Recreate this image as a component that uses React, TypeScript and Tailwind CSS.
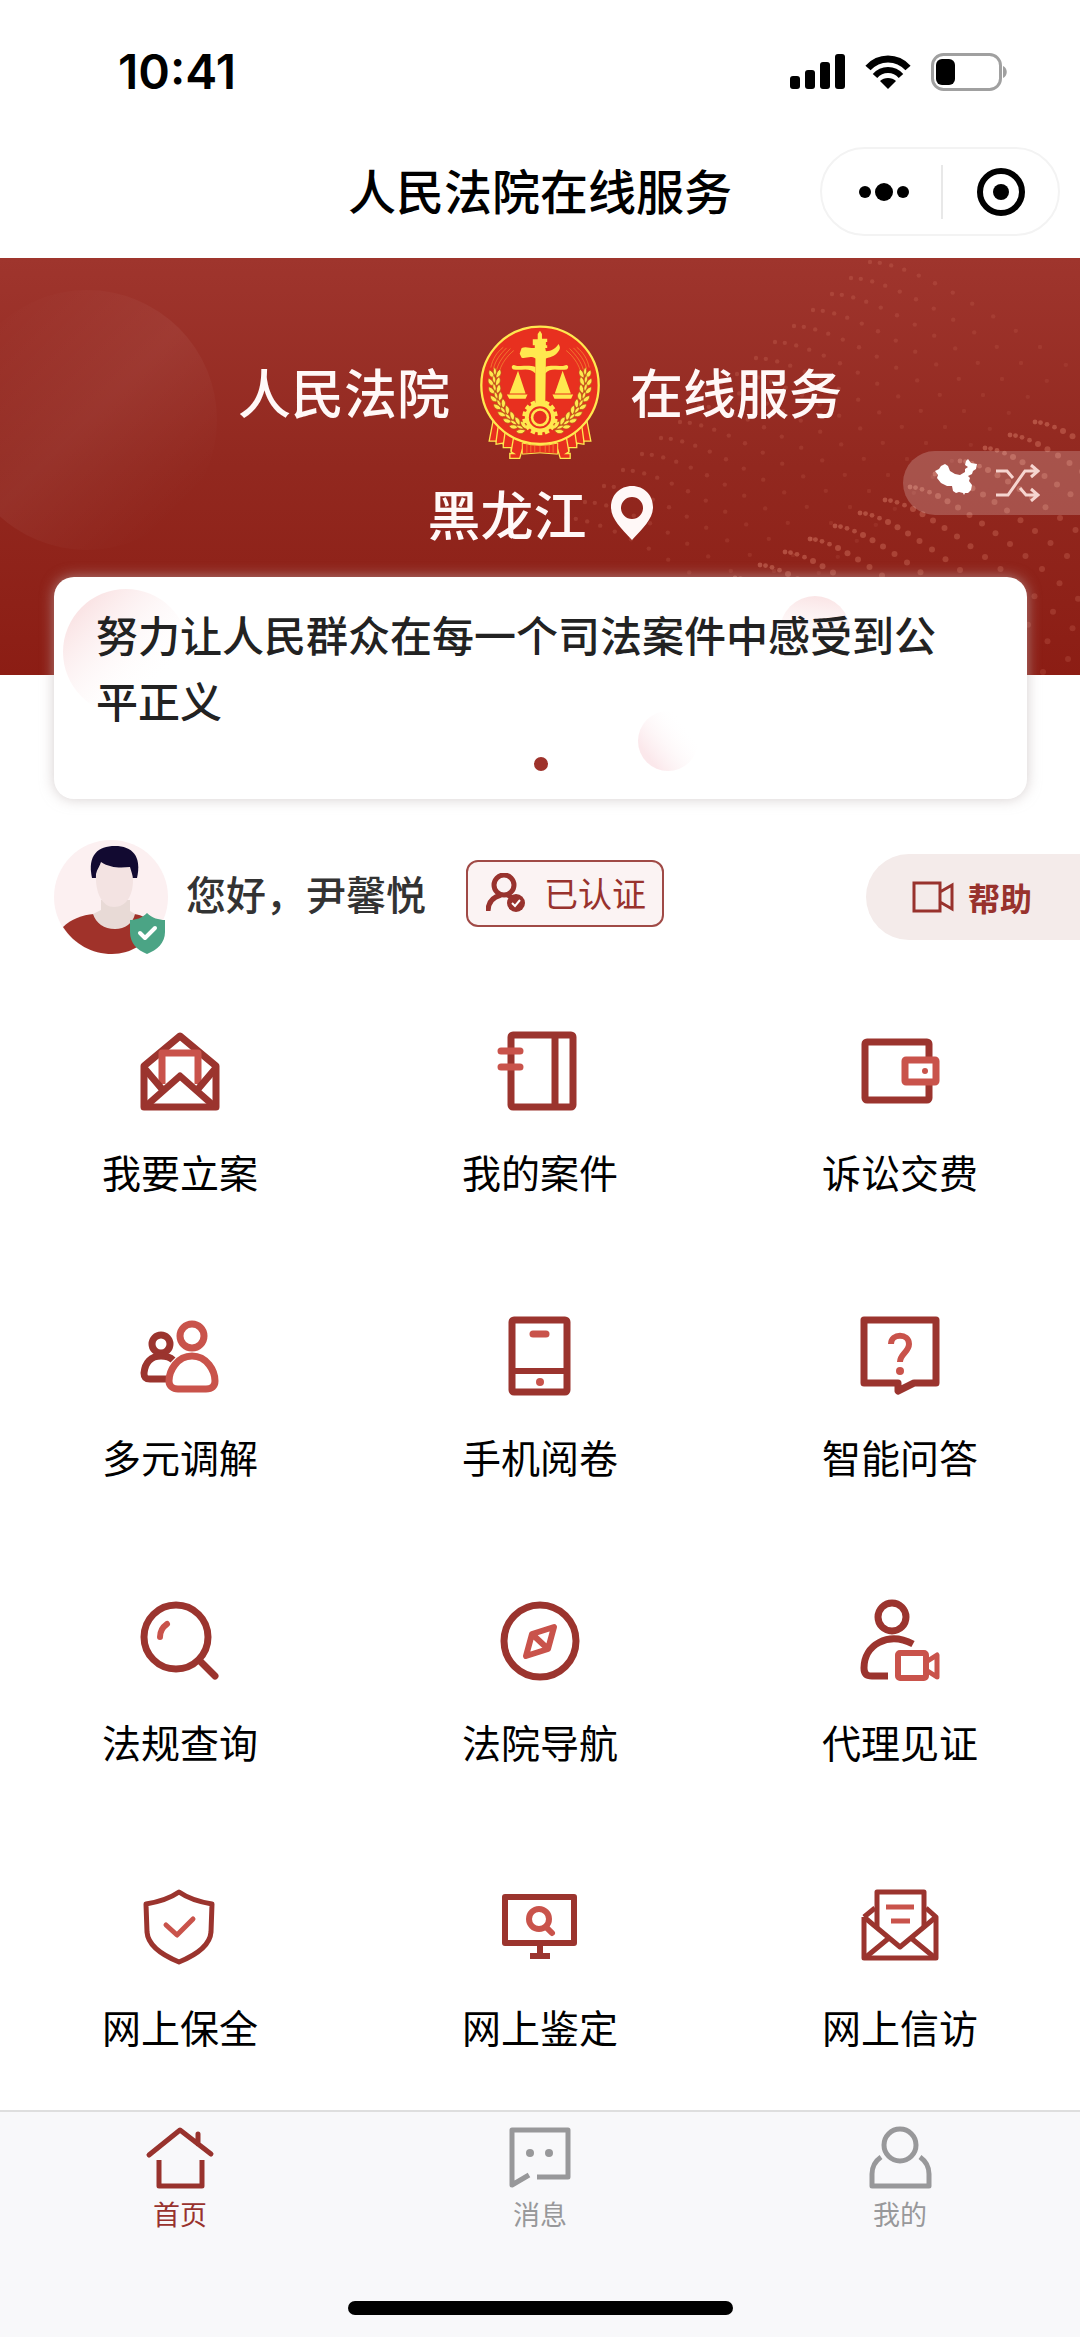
import React from "react";

const DARK = "#9b342e";
const LIGHT = "#c9534b";

type IconProps = { children: React.ReactNode };

function ServiceIcon({ children }: IconProps) {
  return (
    <svg viewBox="0 0 80 80" className="size-20 overflow-visible" fill="none" stroke={DARK} strokeWidth={7} strokeLinejoin="round" aria-hidden="true">
      {children}
    </svg>
  );
}

const services: { label: string; icon: React.ReactNode }[] = [
  {
    label: "我要立案",
    icon: (
      <ServiceIcon>
        <path d="M4 35L40 5L76 35V76H4Z" />
        <path d="M22 53V22H58V53" stroke={LIGHT} />
        <path d="M5 38L22 58M75 38L58 58M6 75L40 45L74 75" />
      </ServiceIcon>
    ),
  },
  {
    label: "我的案件",
    icon: (
      <ServiceIcon>
        <rect x="11" y="4" width="62" height="72" rx="2" />
        <path d="M55 4V76" />
        <path d="M1 20H20M1 36H20" stroke={LIGHT} strokeLinecap="round" />
      </ServiceIcon>
    ),
  },
  {
    label: "诉讼交费",
    icon: (
      <ServiceIcon>
        <rect x="5" y="11" width="64" height="58" rx="2" />
        <rect x="45" y="29" width="31" height="22" rx="1" stroke={LIGHT} fill="#fff" />
        <circle cx="65" cy="40" r="3" fill={LIGHT} stroke="none" />
      </ServiceIcon>
    ),
  },
  {
    label: "多元调解",
    icon: (
      <ServiceIcon>
        <circle cx="21" cy="28" r="9" />
        <path d="M26 63H10C5 63 4 61 4 57C5 47 11 40 21 40C26 40 30 41 33 44" />
        <circle cx="52" cy="20" r="12" stroke={LIGHT} />
        <path d="M52 40C37 40 29 55 29 65C29 70 33 73 38 73H66C72 73 75 70 75 65C75 55 67 40 52 40Z" stroke={LIGHT} fill="#fff" />
      </ServiceIcon>
    ),
  },
  {
    label: "手机阅卷",
    icon: (
      <ServiceIcon>
        <rect x="12" y="4" width="55" height="72" rx="2" />
        <path d="M12 55H67" strokeWidth={6} />
        <path d="M33 18H46" stroke={LIGHT} strokeLinecap="round" />
        <circle cx="40" cy="66" r="4" fill={LIGHT} stroke="none" />
      </ServiceIcon>
    ),
  },
  {
    label: "智能问答",
    icon: (
      <ServiceIcon>
        <path d="M4 4H76V67H54L38 75V67H4Z" />
        <path d="M31 28C31 17 49 17 49 28C49 36 40 38 40 46" stroke={LIGHT} strokeWidth={6} />
        <circle cx="40" cy="55" r="4" fill={LIGHT} stroke="none" />
      </ServiceIcon>
    ),
  },
  {
    label: "法规查询",
    icon: (
      <ServiceIcon>
        <circle cx="36" cy="36" r="32" />
        <path d="M60 60L75 75" strokeLinecap="round" />
        <path d="M27 23Q20 28 20 36" stroke={LIGHT} strokeWidth={6} strokeLinecap="round" />
      </ServiceIcon>
    ),
  },
  {
    label: "法院导航",
    icon: (
      <ServiceIcon>
        <circle cx="40" cy="40" r="36" />
        <path d="M54 26L48 48L26 55L32 33ZM32 33L48 48" stroke={LIGHT} strokeWidth={6} />
      </ServiceIcon>
    ),
  },
  {
    label: "代理见证",
    icon: (
      <ServiceIcon>
        <circle cx="32" cy="16" r="14" />
        <path d="M53 43C28 30 4 44 4 67C4 73 7 75 12 75H28" />
        <rect x="38" y="52" width="28" height="25" rx="2" stroke={LIGHT} strokeWidth={6} />
        <path d="M66 61L77 54V76L66 69" stroke={LIGHT} strokeWidth={5} />
      </ServiceIcon>
    ),
  },
  {
    label: "网上保全",
    icon: (
      <ServiceIcon>
        <path d="M39 6C49 13 60 16 72 18L71 46C70 60 56 69 39 76C22 69 8 60 7 46L6 18C18 16 29 13 39 6Z" strokeWidth={5} />
        <path d="M26 39L37 49L53 33" stroke={LIGHT} strokeWidth={5} strokeLinecap="round" />
      </ServiceIcon>
    ),
  },
  {
    label: "网上鉴定",
    icon: (
      <ServiceIcon>
        <rect x="5" y="11" width="69" height="46" strokeWidth={6} />
        <path d="M40 58V69M30 70H50" strokeWidth={6} />
        <circle cx="39" cy="33" r="10" stroke={LIGHT} strokeWidth={6} />
        <path d="M46 41L52 47" stroke={LIGHT} strokeWidth={6} strokeLinecap="round" />
      </ServiceIcon>
    ),
  },
  {
    label: "网上信访",
    icon: (
      <ServiceIcon>
        <g strokeWidth={5}>
          <path d="M4 31V72H76V31L66 22M4 31L15 22" />
          <path d="M17 42V6H64V42" />
          <path d="M4 31L40 61L76 31M6 71L29 52M74 71L51 52" />
          <path d="M26 21H54M31 35H50" stroke={LIGHT} />
        </g>
      </ServiceIcon>
    ),
  },
];

function TabIcon({ children }: IconProps) {
  return (
    <svg viewBox="0 0 64 64" className="size-16 overflow-visible" fill="none" stroke="currentColor" strokeWidth={5} strokeLinejoin="round" aria-hidden="true">
      {children}
    </svg>
  );
}

const tabs = [
  {
    label: "首页",
    active: true,
    icon: (
      <TabIcon>
        <path d="M1 29L32 4L63 28M50 8V18" strokeLinecap="round" />
        <path d="M11 34V60H54V34" />
      </TabIcon>
    ),
  },
  {
    label: "消息",
    active: false,
    icon: (
      <TabIcon>
        <path d="M29 51H60V4H4V59L21 49" />
        <circle cx="22" cy="27" r="4" fill="currentColor" stroke="none" />
        <circle cx="41" cy="27" r="4" fill="currentColor" stroke="none" />
      </TabIcon>
    ),
  },
  {
    label: "我的",
    active: false,
    icon: (
      <TabIcon>
        <circle cx="32" cy="19" r="16" />
        <path d="M13 31C6 36 4 41 4 48V60H61V48C61 41 59 36 52 31" />
      </TabIcon>
    ),
  },
];

const RED = "#e8301f";
const GOLD = "#ffe84f";

function WheatHalf() {
  const grains = [
    [103, 188, -4],
    [101, 212, -8],
    [103, 236, -14],
    [109, 260, -22],
    [119, 283, -30],
    [132, 304, -38],
    [148, 323, -46],
    [166, 340, -56],
    [186, 353, -66],
  ];
  return (
    <g>
      {grains.map(([x, y, r]) => (
        <g key={y} transform={`translate(${x} ${y}) rotate(${r})`} fill={GOLD} stroke="#b5521a" strokeWidth={2}>
          <path d="M-2 12C-22 8 -20 -8 -16 -14C-6 -8 -2 0 -2 12Z" />
          <path d="M2 12C22 8 20 -8 16 -14C6 -8 2 0 2 12Z" />
          <path d="M0 4C-8 -6 -4 -16 0 -20C4 -16 8 -6 0 4Z" />
        </g>
      ))}
      <path d="M90 168C96 140 108 122 128 106M98 172C104 146 118 128 138 108M108 174C114 152 128 132 150 110M118 174C124 156 138 134 160 116" fill="none" stroke="#f49a35" strokeWidth={2} />
    </g>
  );
}

function Emblem() {
  const teeth = Array.from({ length: 14 }, (_, i) => (i * 360) / 14);
  const ribbon = (
    <g fill={RED} stroke={GOLD} strokeWidth={4}>
      <path d="M98 325L85 392H106V402L128 398V412H152V425L160 430H148V445H178L192 398L180 360Z" />
      <path d="M112 350L106 394M134 362L128 404M160 378L152 424" fill="none" />
    </g>
  );
  return (
    <svg viewBox="54 38 372 412" className="h-[137px] w-[122px]" role="img" aria-label="法院徽章">
      {ribbon}
      <g transform="translate(480 0) scale(-1 1)">{ribbon}</g>
      <path d="M186 398Q240 412 294 398V432Q240 424 186 432Z" fill={RED} stroke={GOLD} strokeWidth={3} />
      <path d="M200 400V428M212 402V427M224 404V426M240 404V426M256 404V426M268 402V427M280 400V428" stroke="#f49a35" strokeWidth={2} />
      <circle cx="240" cy="222" r="179" fill={RED} stroke={GOLD} strokeWidth={7} />
      <WheatHalf />
      <g transform="translate(480 0) scale(-1 1)">
        <WheatHalf />
      </g>
      <g fill={GOLD}>
        <path d="M233 66L240 56L246 66V80H262V90H258V100H262V108H256L258 118C276 118 290 108 296 96C302 104 302 110 298 116C290 130 276 136 258 140L256 280H226V140C210 130 196 142 184 138L178 126L184 108C198 102 212 110 224 108V100H218V82H233Z" />
        <path d="M226 186C208 166 184 178 160 174C152 172 152 160 160 160C180 168 200 158 226 166ZM256 186C272 166 296 178 320 174C328 172 328 160 320 160C300 168 280 158 256 166Z" />
        <path d="M173 178L196 247H147ZM309 178L334 247H285ZM139 250H202L196 263H146ZM278 250H341L335 263H284Z" />
        <g transform="translate(240 320)">
          {teeth.map((a) => (
            <rect key={a} x="-7" y="-54" width="14" height="14" transform={`rotate(${a})`} />
          ))}
          <circle r="46" />
          <circle r="34" fill={RED} />
          <circle r="28" />
          <circle r="20" fill={RED} />
        </g>
      </g>
    </svg>
  );
}

/** Two fans of fading dots behind the banner. */
function BannerDots() {
  const dots: { x: number; y: number; r: number; o: number }[] = [];
  for (let row = 0; row < 17; row++) {
    for (let k = 0; k < 12; k++) {
      dots.push({
        x: 870 - row * 19 + k * 9 + k * k * 0.8,
        y: 4 + row * 16 + k * k * 0.85,
        r: 2.2,
        o: 0.22 - k * 0.01,
      });
    }
  }
  for (let row = 0; row < 16; row++) {
    for (let k = 0; k < 17; k++) {
      dots.push({
        x: 1035 - row * 25 + k * 5 + k * k * 0.5,
        y: 164 + row * 13 + k * k * 0.57,
        r: k < 4 ? 2.4 : 3,
        o: 0.42 - k * 0.015,
      });
    }
  }
  return (
    <svg viewBox="0 0 1080 417" preserveAspectRatio="xMaxYMin slice" className="absolute inset-0 size-full" aria-hidden="true">
      <defs>
        <linearGradient id="halo" x1="0" y1="0" x2="1" y2="1">
          <stop offset="0.1" stopColor="#fff" stopOpacity="0" />
          <stop offset="0.5" stopColor="#fff" stopOpacity="0.05" />
          <stop offset="0.85" stopColor="#fff" stopOpacity="0" />
        </linearGradient>
      </defs>
      <circle cx="87" cy="162" r="130" fill="url(#halo)" />
      {dots.map((d, i) => (
        <circle key={i} cx={d.x} cy={d.y} r={d.r} fill="#e58a74" opacity={d.o} />
      ))}
    </svg>
  );
}

function Avatar() {
  return (
    <svg viewBox="0 0 114 114" className="size-[114px] shrink-0" role="img" aria-label="头像">
      <circle cx="57" cy="57" r="57" fill="#fcf0f1" />
      <path d="M9 87C17 79 28 75 40 74H80C88 75 96 79 103 86C94 103 77 114 58 114C38 114 20 104 9 87Z" fill="#a0322a" />
      <path d="M47 60H76V71L81 74C79 83 71 89 61 89C50 89 42 83 39 74L47 70Z" fill="#e8dad6" />
      <path d="M38 38C33 15 44 6 61 6C78 6 88 16 83 38Z" fill="#120a31" />
      <path d="M42 34C43 29 46 26 47 22C56 28 66 28 76 27C77 31 79 35 79 40C79 56 72 67 60 67C49 67 41 54 42 34Z" fill="#f3e3e2" />
      <path d="M93 73C98 78 105 80 111 80V92C111 103 103 110 93 114C83 110 76 103 76 92V80C82 80 88 78 93 73Z" fill="#4ba485" />
      <path d="M86 93L91 98L101 88" fill="none" stroke="#fff" strokeWidth={4} strokeLinecap="round" strokeLinejoin="round" />
    </svg>
  );
}

function CardBubbles() {
  return (
    <svg viewBox="0 0 973 222" preserveAspectRatio="none" className="absolute inset-0 size-full" aria-hidden="true">
      <defs>
        <linearGradient id="bubble-a" x1="0.1" y1="0.1" x2="0.75" y2="0.75">
          <stop offset="0" stopColor="#f9dfe0" />
          <stop offset="1" stopColor="#fff" stopOpacity="0" />
        </linearGradient>
        <linearGradient id="bubble-b" x1="0.6" y1="0" x2="0.5" y2="1">
          <stop offset="0" stopColor="#fae4e5" />
          <stop offset="0.9" stopColor="#fff" stopOpacity="0" />
        </linearGradient>
        <linearGradient id="bubble-c" x1="0.2" y1="0.8" x2="0.85" y2="0.3">
          <stop offset="0" stopColor="#fbe8eb" />
          <stop offset="1" stopColor="#fff" stopOpacity="0" />
        </linearGradient>
      </defs>
      <circle cx="72" cy="75" r="63" fill="url(#bubble-a)" />
      <circle cx="761" cy="54" r="35" fill="url(#bubble-b)" />
      <circle cx="614" cy="164" r="30" fill="url(#bubble-c)" />
    </svg>
  );
}

export default function App() {
  return (
    <div className="flex min-h-screen flex-col bg-white font-['Noto_Sans_CJK_SC',sans-serif] text-black">
      <div className="flex items-center justify-between pt-11 pr-[72px] pl-[118px]">
        <time className="font-['Inter',sans-serif] text-[48px] leading-14 font-semibold">10:41</time>
        <div className="flex items-center gap-5">
          <svg viewBox="0 0 55 36" className="h-9 w-[55px]" aria-label="信号" role="img">
            <rect x="0" y="22" width="10" height="13" rx="3" />
            <rect x="15" y="16" width="10" height="19" rx="3" />
            <rect x="30" y="8" width="10" height="27" rx="3" />
            <rect x="45" y="0" width="10" height="35" rx="3" />
          </svg>
          <svg viewBox="0 0 46 36" className="h-9 w-[46px]" fill="none" stroke="#000" strokeWidth={7} aria-label="无线网络" role="img">
            <path d="M3 14C14 2 32 2 43 14" />
            <path d="M10 22C17 14 29 14 36 22" strokeWidth={6} />
            <path d="M23 35L15 27C19 23 27 23 31 27Z" fill="#000" stroke="none" />
          </svg>
          <svg viewBox="0 0 77 38" className="h-[38px] w-[77px]" aria-label="电量" role="img">
            <rect x="1.5" y="1.5" width="68" height="35" rx="11" fill="none" stroke="#a0a0a0" strokeWidth={3} />
            <rect x="5" y="6" width="19" height="26" rx="6" />
            <path d="M72 13C77 15 77 23 72 25Z" fill="#a0a0a0" />
          </svg>
        </div>
      </div>

      <header className="mt-[47px] grid grid-cols-[1fr_auto_1fr] items-center pb-[22px]">
        <h1 className="col-start-2 pb-1.5 text-[48px] leading-16 font-medium">人民法院在线服务</h1>
        <div className="mr-[20px] flex h-[89px] w-60 items-center justify-self-end rounded-full border-2 border-[#f3f3f3]">
          <button type="button" aria-label="更多" className="flex flex-1 items-center justify-center gap-1 pl-1">
            <span className="size-3 rounded-full bg-black" />
            <span className="size-[18px] rounded-full bg-black" />
            <span className="size-3 rounded-full bg-black" />
          </button>
          <span className="h-[54px] w-0.5 bg-[#e8e8e8]" />
          <button type="button" aria-label="关闭" className="flex flex-1 items-center justify-center">
            <span className="flex size-12 items-center justify-center rounded-full border-6 border-black">
              <span className="size-4 rounded-full bg-black" />
            </span>
          </button>
        </div>
      </header>

      <section className="relative bg-linear-to-b from-[#9f352d] via-[#92281f] to-[#8c1d14] pt-[66px] pb-[134px] text-[#fff8f7]">
        <BannerDots />
        <div className="relative flex items-center justify-center gap-[29px] text-[53px] leading-14 font-medium">
          <span className="pb-1">人民法院</span>
          <Emblem />
          <span className="pb-1">在线服务</span>
        </div>
        <div className="relative mt-6 flex justify-center">
          <button type="button" className="flex items-center gap-6 text-[53px] leading-14 font-medium">
            黑龙江
            <svg viewBox="0 0 42 54" className="h-[54px] w-[42px]" fill="currentColor" aria-hidden="true">
              <path fillRule="evenodd" d="M21 0C9 0 0 9 0 21C0 33 10 42 21 54C32 42 42 33 42 21C42 9 33 0 21 0ZM21 11A11 11 0 1 1 21 33A11 11 0 1 1 21 11Z" />
            </svg>
          </button>
        </div>
        <button type="button" aria-label="切换地区" className="absolute top-[193px] right-0 flex h-16 items-center gap-[18px] rounded-l-full bg-white/20 pr-10 pl-8">
          <svg viewBox="0 0 43 36" className="mb-3 h-9 w-[43px]" fill="#fff" aria-hidden="true">
            <path d="M0 12L4 10L6 7L10 5L13 7L15 12L20 15L25 16L30 13L30 10L33 8L30 6L31 2L33 0L36 4L42 5L41 10L38 12L37 15L33 17L35 19L34 22L37 26L36 31L33 34L30 34L29 36L28 34L24 33L21 34L18 32L17 27L12 27L6 24L2 19L3 16Z" />
          </svg>
          <svg viewBox="0 0 44 38" className="h-[38px] w-11" fill="none" stroke="#f6d5d0" strokeWidth={3} aria-hidden="true">
            <path d="M0 7H11L17 14M0 31H12L29 7H42M24 24L30 31H42M35 1L42 7L35 13M35 25L42 31L35 37" />
          </svg>
        </button>
      </section>

      <section className="relative -mt-[98px] mr-[53px] ml-[54px] rounded-[20px] bg-white pt-6 pb-7 shadow-[0_0_14px_rgba(190,180,180,0.65)]">
        <CardBubbles />
        <p className="relative pr-20 pl-[42px] text-[42px] leading-[66px] font-medium text-[#222]">努力让人民群众在每一个司法案件中感受到公平正义</p>
        <div className="relative mt-6 flex justify-center">
          <span className="size-[14px] rounded-full bg-[#9e322b]" />
        </div>
      </section>

      <section className="mt-[41px] flex items-center pl-[54px]">
        <Avatar />
        <div className="flex items-center pb-2">
          <p className="ml-[18px] text-[40px] leading-14 font-medium text-[#333]">您好，尹馨悦</p>
          <div className="ml-10 flex h-[67px] items-center gap-[18px] rounded-xl border-2 border-[#a04a46] bg-[#fbf3f3] pr-4 pl-[18px] text-[#98322d]">
            <svg viewBox="0 0 40 40" className="size-10" fill="none" stroke="currentColor" strokeWidth={5} aria-hidden="true">
              <circle cx="18" cy="12" r="10" />
              <path d="M2 38C2 29 7 24 15 22M22 22L26 25" />
              <circle cx="30" cy="30" r="9" fill="currentColor" stroke="none" />
              <path d="M26 30L29 33L34 27" stroke="#fff" strokeWidth={2} />
            </svg>
            <span className="text-[34px] leading-12">已认证</span>
          </div>
        </div>
        <button type="button" className="ml-auto flex h-[86px] items-center gap-[14px] rounded-l-full bg-[#f4ebea] pr-12 pl-[46px] text-[#98322d]">
          <svg viewBox="0 0 42 32" className="h-8 w-[42px]" fill="none" stroke="currentColor" strokeWidth={3} aria-hidden="true">
            <path d="M2 2H28V30H2ZM28 11L40 4V28L28 21" />
          </svg>
          <span className="text-[32px] leading-12 font-bold">帮助</span>
        </button>
      </section>

      <main className="mt-[77px] grid grid-cols-3 gap-y-[117px] pb-10">
        {services.map((s) => (
          <a key={s.label} href="#" className="flex flex-col items-center gap-8">
            {s.icon}
            <span className="text-[39px] leading-14">{s.label}</span>
          </a>
        ))}
      </main>

      <nav className="mt-auto border-t-2 border-[#dedede] bg-[#f8f8fa] pt-3.5 pb-[22px]">
        <div className="grid grid-cols-3">
          {tabs.map((t) => (
            <a
              key={t.label}
              href="#"
              aria-current={t.active ? "page" : undefined}
              className={t.active ? "flex flex-col items-center gap-1.5 text-[#98322d]" : "flex flex-col items-center gap-1.5 text-[#98989a]"}
            >
              {t.icon}
              <span className="text-[27px] leading-9">{t.label}</span>
            </a>
          ))}
        </div>
        <div className="mx-auto mt-[69px] h-[14px] w-[385px] rounded-full bg-black" />
      </nav>
    </div>
  );
}
